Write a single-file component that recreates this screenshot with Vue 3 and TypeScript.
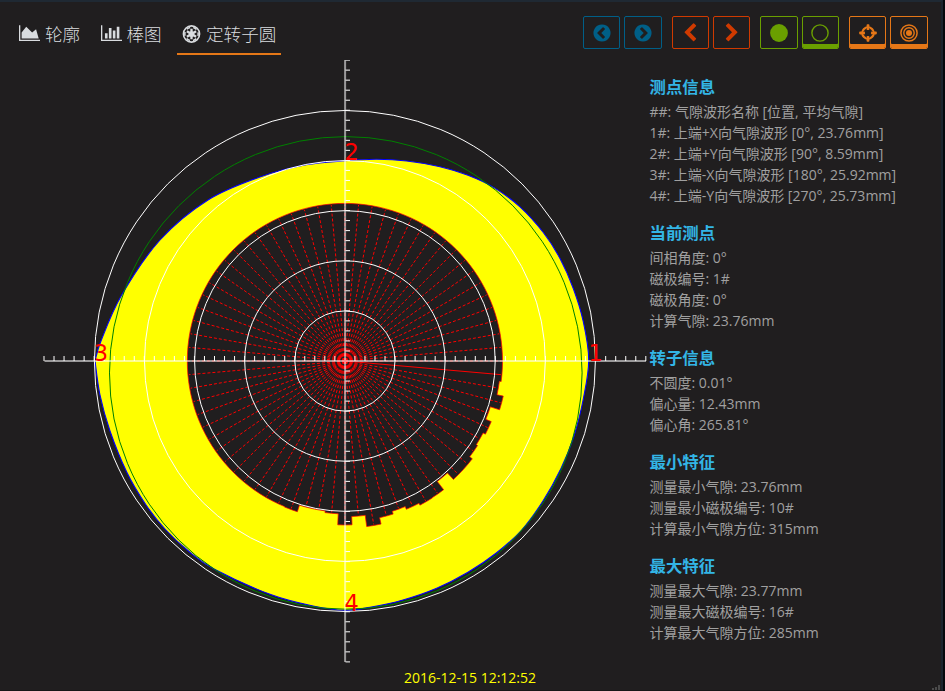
<script setup lang="ts">
interface Section {
  title: string
  lines: string[]
}
interface Point {
  x: number
  y: number
}

const sections: Section[] = [
  {
    title: '测点信息',
    lines: [
      '##: 气隙波形名称 [位置, 平均气隙]',
      '1#: 上端+X向气隙波形 [0°, 23.76mm]',
      '2#: 上端+Y向气隙波形 [90°, 8.59mm]',
      '3#: 上端-X向气隙波形 [180°, 25.92mm]',
      '4#: 上端-Y向气隙波形 [270°, 25.73mm]',
    ],
  },
  { title: '当前测点', lines: ['间相角度: 0°', '磁极编号: 1#', '磁极角度: 0°', '计算气隙: 23.76mm'] },
  { title: '转子信息', lines: ['不圆度: 0.01°', '偏心量: 12.43mm', '偏心角: 265.81°'] },
  { title: '最小特征', lines: ['测量最小气隙: 23.76mm', '测量最小磁极编号: 10#', '计算最小气隙方位: 315mm'] },
  { title: '最大特征', lines: ['测量最大气隙: 23.77mm', '测量最大磁极编号: 16#', '计算最大气隙方位: 285mm'] },
]

const cx = 344.9
const cy = 361

// Stator outline, clockwise from the left-hand probe
const outline: number[][] = [
  [95, 361], [101, 341], [121.7, 295], [160, 240], [208, 200], [260, 177], [306, 164.8], [345, 160.8],
  [376.7, 159.3], [406.7, 161], [440, 166.7], [468, 175.3], [494, 187.6], [520, 206.9], [543.3, 232.5],
  [560, 258.5], [573.3, 288.5], [583.3, 321.7], [588.7, 360], [583.5, 398], [574, 436], [561, 468.5],
  [543.3, 500.5], [521.7, 530], [496, 553.3], [468, 572.3], [436.7, 588.3], [403, 600], [370, 607.3], [345, 610.3],
  [313, 606], [270, 594.3], [215, 569.5], [189, 551.5], [165, 529], [145.7, 504.5], [126.7, 472], [110, 431], [100, 395], [95, 361],
]

function smooth(pts: number[][]): string {
  let d = `M${pts[0][0]} ${pts[0][1]}`
  for (let i = 0; i < pts.length - 1; i++) {
    const p0 = pts[Math.max(i - 1, 0)]
    const p1 = pts[i]
    const p2 = pts[i + 1]
    const p3 = pts[Math.min(i + 2, pts.length - 1)]
    const a = [p1[0] + (p2[0] - p0[0]) / 6, p1[1] + (p2[1] - p0[1]) / 6]
    const b = [p2[0] - (p3[0] - p1[0]) / 6, p2[1] - (p3[1] - p1[1]) / 6]
    d += `C${a[0].toFixed(2)} ${a[1].toFixed(2)} ${b[0].toFixed(2)} ${b[1].toFixed(2)} ${p2[0]} ${p2[1]}`
  }
  return d + 'Z'
}
const statorPath = smooth(outline)

// Pole radius by angle (degrees, clockwise); all others use the nominal radius
const nominal = 157.6
const poleRadius: Record<number, number> = {
  10: 155.8, 15: 162.2, 20: 152.5, 25: 158.4, 30: 155.8, 35: 157.3, 40: 160.6, 45: 160.6, 50: 151.8,
  55: 162.2, 60: 162.5, 65: 160.5, 70: 157.6, 75: 160.5, 80: 167, 85: 155.7, 90: 164, 95: 152.9,
  100: 151.2, 105: 151.2, 110: 158,
}
const polar = (deg: number, r: number): Point => {
  const t = (deg * Math.PI) / 180
  return { x: +(cx + r * Math.cos(t)).toFixed(2), y: +(cy + r * Math.sin(t)).toFixed(2) }
}
const poles = Array.from({ length: 72 }, (_, i) => {
  const deg = i * 5
  const r = poleRadius[deg] ?? nominal
  return { deg, r, end: polar(deg, r - 1) }
})
const rotorPath =
  poles
    .map((p, i) => {
      const a = polar(p.deg - 2.5, p.r)
      const b = polar(p.deg + 2.5, p.r)
      return `${i ? 'L' : 'M'}${a.x} ${a.y}A${p.r} ${p.r} 0 0 1 ${b.x} ${b.y}`
    })
    .join('') + 'Z'

const rings = [1, 2, 3, 4, 5].map((n) => n * 50.1)
const ticks = Array.from({ length: 61 }, (_, i) => (i - 30) * 10.03).filter((v) => Math.abs(v) > 1)
const tickPath = ticks
  .map((v) => `M${(cx + v).toFixed(2)} 356V361M345.5 ${(cy + v).toFixed(2)}H350`)
  .join('')

const labels = [
  { text: '1', x: 588.5, y: 361 },
  { text: '2', x: 344.4, y: 159.7 },
  { text: '3', x: 93.8, y: 361 },
  { text: '4', x: 344.6, y: 611 },
]

const chevronLeft =
  'M1427 301l-531 531 531 531q19 19 19 45t-19 45l-166 166q-19 19-45 19t-45-19l-742-742q-19-19-19-45t19-45l742-742q19-19 45-19t45 19l166 166q19 19 19 45t-19 45z'
const chevronRight =
  'M1363 877l-742 742q-19 19-45 19t-45-19l-166-166q-19-19-19-45t19-45l531-531-531-531q-19-19-19-45t19-45l166-166q19-19 45-19t45 19l742 742q19 19 19 45t-19 45z'
const circleChevron =
  'M1037 1395l102-102q19-19 19-45t-19-45l-307-307 307-307q19-19 19-45t-19-45l-102-102q-19-19-45-19t-45 19l-454 454q-19 19-19 45t19 45l454 454q19 19 45 19t45-19zm627-499q0 209-103 385.5t-279.5 279.5-385.5 103-385.5-103-279.5-279.5-103-385.5 103-385.5 279.5-279.5 385.5-103 385.5 103 279.5 279.5 103 385.5z'
</script>

<template>
  <div class="window">
    <header class="bar">
      <nav class="tabs">
        <a class="tab">
          <svg class="chart-icon" viewBox="0 0 2048 1792"><path d="M2048 1536v128h-2048v-1536h128v1408h1920zm-384-1024l256 896h-1664v-576l448-576 576 576z" /></svg>
          <span>轮廓</span>
        </a>
        <a class="tab">
          <svg class="chart-icon" viewBox="0 0 2048 1792"><path d="M640 896v512h-256v-512h256zm384-512v1024h-256v-1024h256zm1024 1152v128h-2048v-1536h128v1408h1920zm-640-896v768h-256v-768h256zm384-384v1152h-256v-1152h256z" /></svg>
          <span>棒图</span>
        </a>
        <a class="tab active">
          <svg class="wheel-icon" viewBox="-10 -10 20 20">
            <circle r="8.5" fill="none" stroke="currentColor" stroke-width="1.7" />
            <circle r="7" fill="none" stroke="currentColor" stroke-width="1.6" stroke-dasharray="4 3.33" stroke-dashoffset="2" />
            <circle r="3" />
            <path v-for="n in 6" :key="n" :transform="`rotate(${n * 60})`" d="M-1.3 -2L-1.2 -5.6H1.2L1.3 -2z" />
          </svg>
          <span>定转子圆</span>
        </a>
      </nav>
      <div class="groups">
        <div class="group blue">
          <button class="btn"><svg viewBox="0 0 1792 1792"><path :d="circleChevron" /></svg></button>
          <button class="btn"><svg viewBox="0 0 1792 1792"><path :d="circleChevron" transform="translate(1792 0) scale(-1 1)" /></svg></button>
        </div>
        <div class="group red">
          <button class="btn"><svg viewBox="0 0 1792 1792"><path :d="chevronLeft" /></svg></button>
          <button class="btn"><svg viewBox="0 0 1792 1792"><path :d="chevronRight" /></svg></button>
        </div>
        <div class="group green">
          <button class="btn"><svg viewBox="-10 -10 20 20"><circle r="8.9" /></svg></button>
          <button class="btn on"><svg viewBox="-10 -10 20 20"><circle r="8.1" fill="none" stroke="currentColor" stroke-width="1.4" /></svg></button>
        </div>
        <div class="group orange">
          <button class="btn on">
            <svg viewBox="-10 -10 20 20">
              <circle r="5.7" fill="none" stroke="currentColor" stroke-width="2.3" />
              <g class="gaps"><rect v-for="n in 4" :key="n" x="-2" y="-4.6" width="4" height="3" :transform="`rotate(${n * 90})`" /></g>
              <rect v-for="n in 4" :key="n" x="-1.4" y="-8.8" width="2.8" height="5.8" rx=".8" :transform="`rotate(${n * 90})`" />
            </svg>
          </button>
          <button class="btn on">
            <svg viewBox="-10 -10 20 20">
              <circle r="3" />
              <circle r="5.2" fill="none" stroke="currentColor" stroke-width="1.4" />
              <circle r="8.1" fill="none" stroke="currentColor" stroke-width="1.5" />
            </svg>
          </button>
        </div>
      </div>
    </header>

    <main class="content">
      <svg class="plot" viewBox="0 60 648 604">
        <path class="stator" :d="statorPath" />
        <path class="rotor" :d="rotorPath" />
        <line
          v-for="p in poles"
          :key="p.deg"
          class="pole"
          :class="{ current: p.deg === 5 }"
          :x1="cx"
          :y1="cy"
          :x2="p.end.x"
          :y2="p.end.y"
        />
        <circle class="fit" cx="345.8" cy="372.9" r="236.3" />
        <circle v-for="r in rings" :key="r" class="ring" :cx="cx" :cy="cy" :r="r" />
        <path class="ticks" :d="tickPath" />
        <path class="axis" d="M44.5 361H646M345.1 60V662" />
        <text v-for="l in labels" :key="l.text" class="probe" :x="l.x" :y="l.y">{{ l.text }}</text>
      </svg>
      <aside class="info">
        <section v-for="s in sections" :key="s.title">
          <h3>{{ s.title }}</h3>
          <p v-for="line in s.lines" :key="line">{{ line }}</p>
        </section>
      </aside>
    </main>

    <footer class="stamp">2016-12-15 12:12:52</footer>
    <svg class="grip" viewBox="0 0 9 5"><path d="M0 3h2v2H0zM3 2h2v3H3zM6 0h2v5H6z" /></svg>
  </div>
</template>

<style>
body {
  margin: 0;
  background: #05080c;
  overflow: hidden;
}
</style>

<style scoped>
.window {
  position: relative;
  box-sizing: border-box;
  width: 943px;
  height: 691px;
  border-top: 2px solid #1f2933;
  border-right: 2px solid #1b242d;
  border-bottom: 1px solid #171618;
  background: #201e1f;
  font-family: 'Open Sans', 'Noto Sans CJK SC', sans-serif;
  color: #a0a0a0;
}
.bar {
  display: flex;
  justify-content: space-between;
  height: 58px;
  padding: 0 13.4px 0 14px;
}
.tabs {
  display: flex;
  gap: 10.3px;
  padding-top: 12px;
}
.tab {
  display: flex;
  align-items: center;
  box-sizing: border-box;
  height: 41px;
  gap: 5px;
  padding: 0 5px;
  border-bottom: 2px solid transparent;
  color: #d9dcdf;
  font-size: 17.6px;
  font-weight: 300;
  line-height: 20px;
  white-space: nowrap;
}
.tab.active {
  border-bottom-color: #e57717;
}
.tab svg {
  fill: currentColor;
}
.chart-icon {
  width: 21px;
  height: 18.4px;
}
.wheel-icon {
  width: 19px;
  height: 20px;
}
.groups {
  display: flex;
  gap: 10px;
  padding-top: 14px;
}
.group {
  display: flex;
  gap: 3.9px;
}
.btn {
  display: flex;
  align-items: center;
  justify-content: center;
  box-sizing: border-box;
  width: 37.4px;
  height: 33px;
  padding: 0;
  border: 1px solid currentColor;
  border-radius: 2px;
  background: none;
  color: inherit;
}
.btn.on {
  box-shadow: inset 0 -4px 0 currentColor;
}
.btn svg {
  width: 20px;
  height: 20px;
  fill: currentColor;
}
.gaps {
  fill: #201e1f;
}
.blue {
  color: #005f87;
}
.red {
  color: #d03a00;
}
.green {
  color: #6a9f00;
}
.orange {
  color: #e57717;
}
.content {
  display: flex;
}
.plot {
  display: block;
  flex: none;
  width: 648px;
  height: 604px;
}
.stator {
  fill: #ff0;
  stroke: #00f;
  stroke-width: 1.1;
}
.rotor {
  fill: #201e1f;
  stroke: #f00;
  stroke-width: 0.7;
}
.pole {
  stroke: #f00;
  stroke-width: 1;
  stroke-dasharray: 3 2;
}
.pole.current {
  stroke-dasharray: none;
}
.fit {
  fill: none;
  stroke: #008000;
  stroke-width: 1;
}
.ring {
  fill: none;
  stroke: #fff;
  stroke-width: 1;
}
.ticks {
  stroke: #fff;
  stroke-width: 1;
}
.axis {
  stroke: rgba(255, 255, 255, 0.55);
  stroke-width: 2;
}
.probe {
  fill: #f00;
  font-family: 'DejaVu Sans', sans-serif;
  font-size: 22.5px;
}
.info {
  padding: 14px 0 0 1.5px;
}
.info section {
  margin-bottom: 14px;
}
.info h3 {
  height: 27px;
  margin: 0;
  color: #33b5e5;
  font-size: 16.4px;
  font-weight: 700;
  line-height: 26px;
  white-space: nowrap;
}
.info p {
  height: 21px;
  margin: 0;
  font-size: 14px;
  line-height: 21px;
  font-weight: 400;
  white-space: nowrap;
}
.stamp {
  height: 26px;
  margin-top: 4px;
  padding-right: 1px;
  color: #ff0;
  font-size: 14px;
  line-height: 20px;
  text-align: center;
}
.grip {
  position: absolute;
  right: 0;
  bottom: 0;
  width: 9px;
  height: 5px;
  fill: #4a4a4a;
}
</style>
